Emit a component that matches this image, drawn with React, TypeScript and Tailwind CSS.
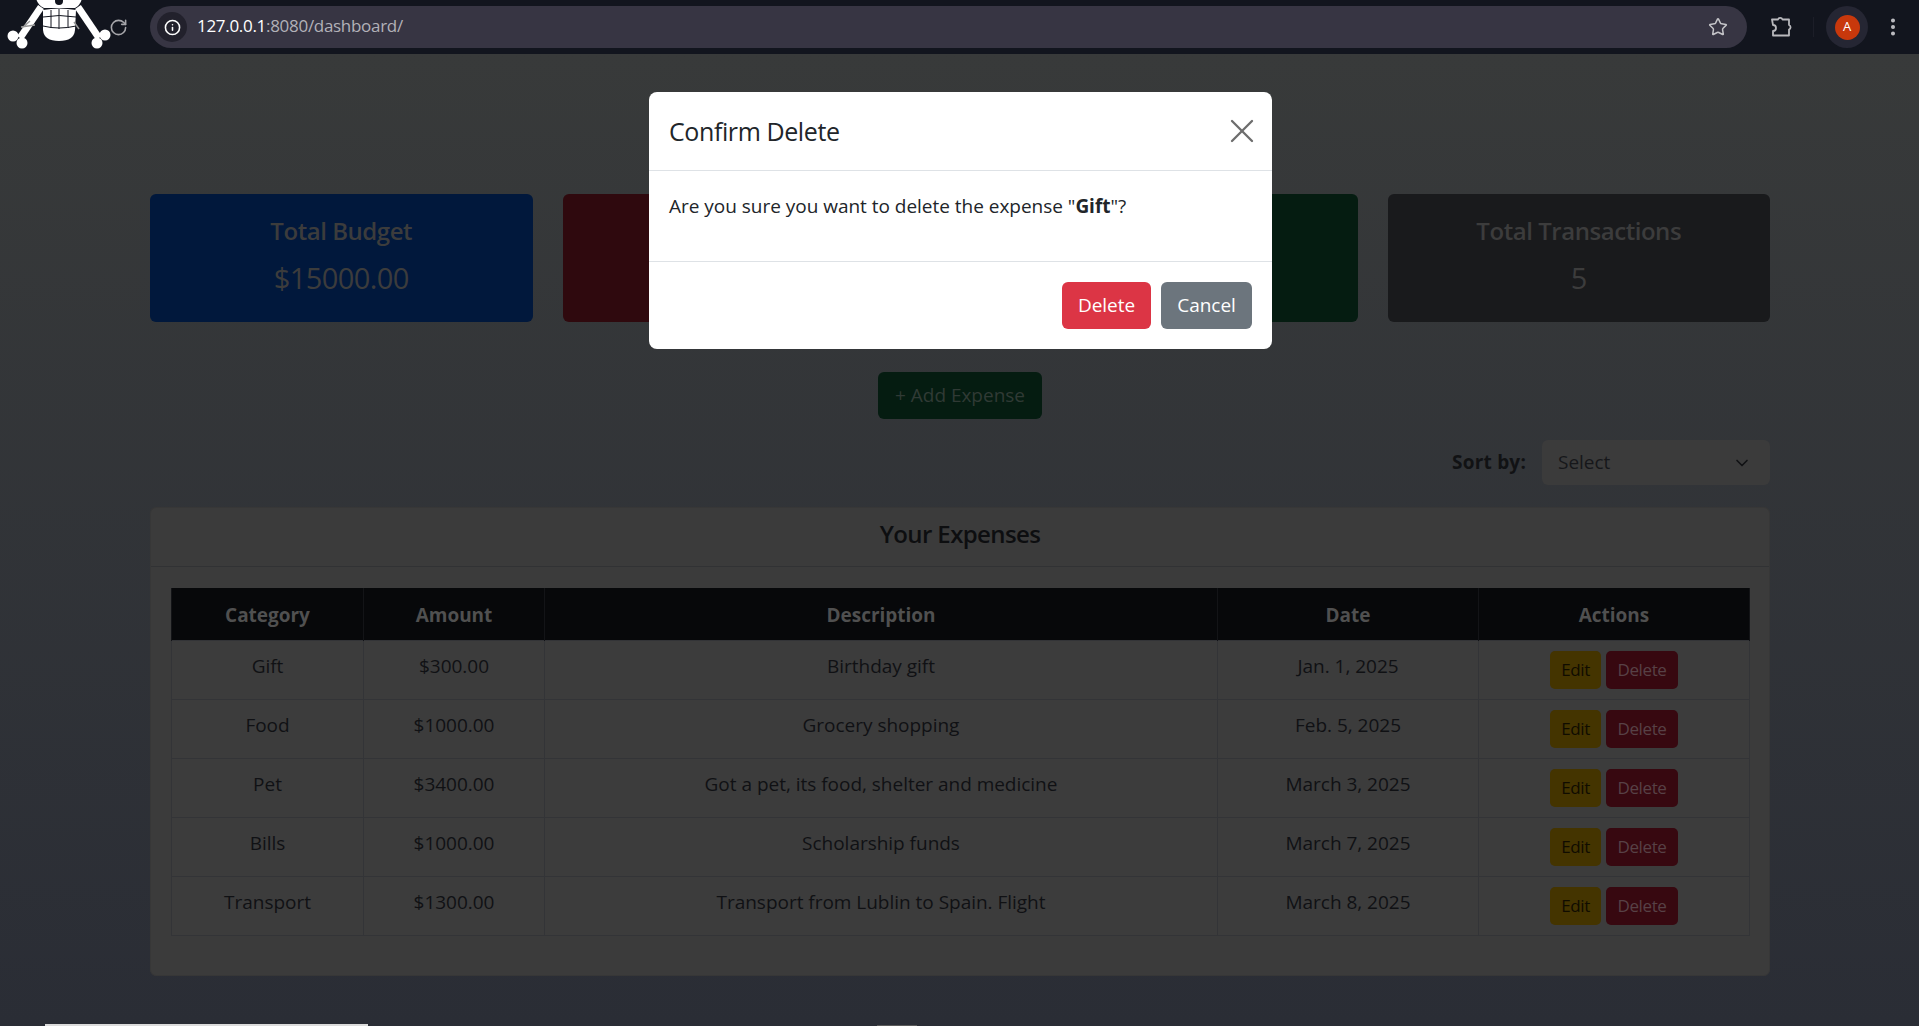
import { Info, RotateCw, Star, EllipsisVertical, ChevronDown, X } from 'lucide-react';

// the middle two cards sit fully behind the modal, so their text never shows
const cards = [
  { id: 'budget', title: 'Total Budget', value: '$15000.00', bg: 'bg-[#01183c]' },
  { id: 'spent', title: '', value: '', bg: 'bg-[#2f090e]' },
  { id: 'left', title: '', value: '', bg: 'bg-[#051c11]' },
  { id: 'count', title: 'Total Transactions', value: '5', bg: 'bg-[#191a1c]' },
];

const expenses = [
  { category: 'Gift', amount: '$300.00', description: 'Birthday gift', date: 'Jan. 1, 2025' },
  { category: 'Food', amount: '$1000.00', description: 'Grocery shopping', date: 'Feb. 5, 2025' },
  { category: 'Pet', amount: '$3400.00', description: 'Got a pet, its food, shelter and medicine', date: 'March 3, 2025' },
  { category: 'Bills', amount: '$1000.00', description: 'Scholarship funds', date: 'March 7, 2025' },
  { category: 'Transport', amount: '$1300.00', description: 'Transport from Lublin to Spain. Flight', date: 'March 8, 2025' },
];

function Skull() {
  return (
    <svg width="112" height="54" viewBox="0 0 112 54" className="shrink-0">
      <g stroke="#fff" strokeWidth="7">
        <line x1="20" y1="38" x2="41" y2="7" />
        <line x1="99" y1="38" x2="78" y2="7" />
      </g>
      <g fill="#fff">
        <circle cx="13" cy="36" r="5.5" />
        <circle cx="22" cy="43" r="5.5" />
        <circle cx="105" cy="35" r="5.5" />
        <circle cx="97" cy="43" r="5.5" />
      </g>
      <path d="M36 -4 H82 Q82 4 75 8 H44 Q36 4 36 -4 Z" fill="#fff" />
      <circle cx="59" cy="1" r="4" fill="#12151e" />
      <path d="M43 10 Q59 7 76 10 L75 30 Q74 41 59 41 Q44 41 43 30 Z" fill="#fff" />
      <g stroke="#12151e" strokeWidth="1" fill="none">
        <path d="M43 17 Q59 14 76 17" />
        <path d="M43 26 Q59 30 76 26" />
        <path d="M51 10 V28 M59 9 V29 M68 10 V28" />
      </g>
      <path d="M21 27 L35 25 M22 28 L30 21 M74 22 L79 29" stroke="#9a9a9a" strokeWidth="1.5" />
    </svg>
  );
}

function Puzzle() {
  return (
    <svg width="22" height="22" viewBox="0 0 22 22" fill="none" stroke="#b9b9bd" strokeWidth="1.8" strokeLinejoin="round">
      <path d="M2 3.5 H8 A2.4 2.4 0 0 1 12.5 3.5 H19 V9 A2.4 2.4 0 0 1 19 13.5 V19.5 H3 V15 A3 3 0 0 0 3 9 Z" />
    </svg>
  );
}

function BrowserBar() {
  return (
    <div className="flex h-[54px] items-center bg-[#12151e]">
      <div className="flex w-[150px] items-center">
        <Skull />
        <RotateCw size={19} strokeWidth={2} className="-ml-[3px] text-[#a6a6aa]" />
      </div>
      <div className="flex h-[42px] w-[1597px] items-center rounded-full bg-[#373543] pl-[7px] pr-[19px]">
        <div className="flex h-[30px] w-[30px] items-center justify-center rounded-full bg-[#22212c]">
          <Info size={17} strokeWidth={2.2} className="text-white" />
        </div>
        <div className="ml-[10px] flex-1 pb-[2px] text-[17px] tracking-[-0.3px] text-[#b2b1b8]">
          <span className="text-white">127.0.0.1</span>:8080/dashboard/
        </div>
        <Star size={20} strokeWidth={1.8} className="text-[#c4c4c8]" />
      </div>
      <div className="ml-[23px]"><Puzzle /></div>
      <div className="ml-[21px] h-[20px] w-px bg-[#1c1e28]" />
      <div className="ml-[12px] flex h-[42px] w-[42px] items-center justify-center rounded-full bg-[#252633]">
        <div className="flex h-[25px] w-[25px] items-center justify-center rounded-full bg-[#c8380c] text-[13px] text-white">A</div>
      </div>
      <EllipsisVertical size={22} strokeWidth={2.4} className="ml-[14px] text-[#bdbdc2]" />
    </div>
  );
}

export default function App() {
  return (
    <div className="relative h-[1026px] overflow-hidden font-['Open_Sans',sans-serif] text-[19px] tracking-[-0.02px]">
      <BrowserBar />

      <div className="h-[972px] bg-gradient-to-b from-[#383a3a] to-[#2a2d35] pl-[150px] pr-[149px] pt-[140px]">
        <div className="grid grid-cols-4 gap-[30px]">
          {cards.map(c => (
            <div key={c.id} className={`h-[128px] rounded-[6px] pt-[19px] text-center text-[#3c3c3c] ${c.bg}`}>
              <div className="text-[24px] font-semibold leading-[36px] tracking-[-0.45px]">{c.title}</div>
              <div className="mt-[11px] text-[29px] leading-[36px] tracking-[-0.6px]">{c.value}</div>
            </div>
          ))}
        </div>

        <div className="mt-[50px] flex justify-center">
          <button className="h-[47px] w-[164px] rounded-[6px] bg-[#051c11] text-[#303a35]">+ Add Expense</button>
        </div>

        <div className="mt-[21px] flex items-center justify-end gap-[16px]">
          <label className="font-bold tracking-[0.2px] text-[#111214]">Sort by:</label>
          <div className="flex h-[45px] w-[228px] items-center justify-between rounded-[6px] bg-[#3b3b3b] pl-[16px] pr-[18px] text-[#16171a]">
            Select
            <ChevronDown size={20} strokeWidth={2} className="text-[#111214]" />
          </div>
        </div>

        <div className="mt-[22px] h-[469px] rounded-[6px] border border-[#373737] bg-[#3b3b3b]">
          <div className="flex h-[59px] items-center justify-center border-b border-[#313234] pb-[7px] text-[24px] font-semibold tracking-[-0.6px] text-[#0d0e10]">
            Your Expenses
          </div>
          <div className="px-[20px] pt-[21px]">
            <table className="w-full table-fixed border-collapse text-center text-[#101114]">
              <colgroup>
                <col className="w-[192px]" />
                <col className="w-[181px]" />
                <col className="w-[673px]" />
                <col className="w-[261px]" />
                <col className="w-[271px]" />
              </colgroup>
              <thead>
                <tr className="h-[52px] bg-[#07080a] font-bold text-[#505050]">
                  {['Category', 'Amount', 'Description', 'Date', 'Actions'].map(h => (
                    <th key={h} className="border-x border-[#131417] pt-[2px] align-middle">{h}</th>
                  ))}
                </tr>
              </thead>
              <tbody>
                {expenses.map(e => (
                  <tr key={e.category} className="h-[59px] bg-[#3c3c3c]">
                    <td className="border border-[#333437] pt-[10px] align-top leading-[30px]">{e.category}</td>
                    <td className="border border-[#333437] pt-[10px] align-top leading-[30px]">{e.amount}</td>
                    <td className="border border-[#333437] pt-[10px] align-top leading-[30px]">{e.description}</td>
                    <td className="border border-[#333437] pt-[10px] align-top leading-[30px]">{e.date}</td>
                    <td className="border border-[#333437] pt-[10px] align-top">
                      <div className="flex justify-center gap-[5px] text-[17px] tracking-[-0.4px]">
                        <button className="h-[38px] w-[51px] rounded-[5px] bg-[#443400] text-[#100c00]">Edit</button>
                        <button className="h-[38px] w-[72px] rounded-[5px] bg-[#370810] text-[#574146]">Delete</button>
                      </div>
                    </td>
                  </tr>
                ))}
              </tbody>
            </table>
          </div>
        </div>
      </div>

      <div className="absolute left-[649px] top-[92px] w-[623px] rounded-[8px] bg-white text-[#212529]">
        <div className="flex h-[79px] items-center justify-between border-b border-[#dee2e6] pl-[20px] pr-[10px]">
          <span className="pt-[2px] text-[25px] font-medium tracking-[-0.4px]">Confirm Delete</span>
          <X size={40} strokeWidth={1.4} className="text-[#6d6d6d]" />
        </div>
        <div className="h-[91px] border-b border-[#dee2e6] px-[20px] pt-[20px] leading-[30px]">
          Are you sure you want to delete the expense "<b>Gift</b>"?
        </div>
        <div className="flex h-[87px] items-center justify-end gap-[10px] pr-[20px]">
          <button className="h-[47px] w-[89px] rounded-[6px] bg-[#dc3545] text-white">Delete</button>
          <button className="h-[47px] w-[91px] rounded-[6px] bg-[#6c757d] text-white">Cancel</button>
        </div>
      </div>

      <div className="absolute bottom-0 left-[45px] h-[2px] w-[323px] bg-[#dcdcdc]" />
      <div className="absolute bottom-0 left-[877px] h-[1px] w-[40px] bg-[#5a5a5a]" />
    </div>
  );
}
